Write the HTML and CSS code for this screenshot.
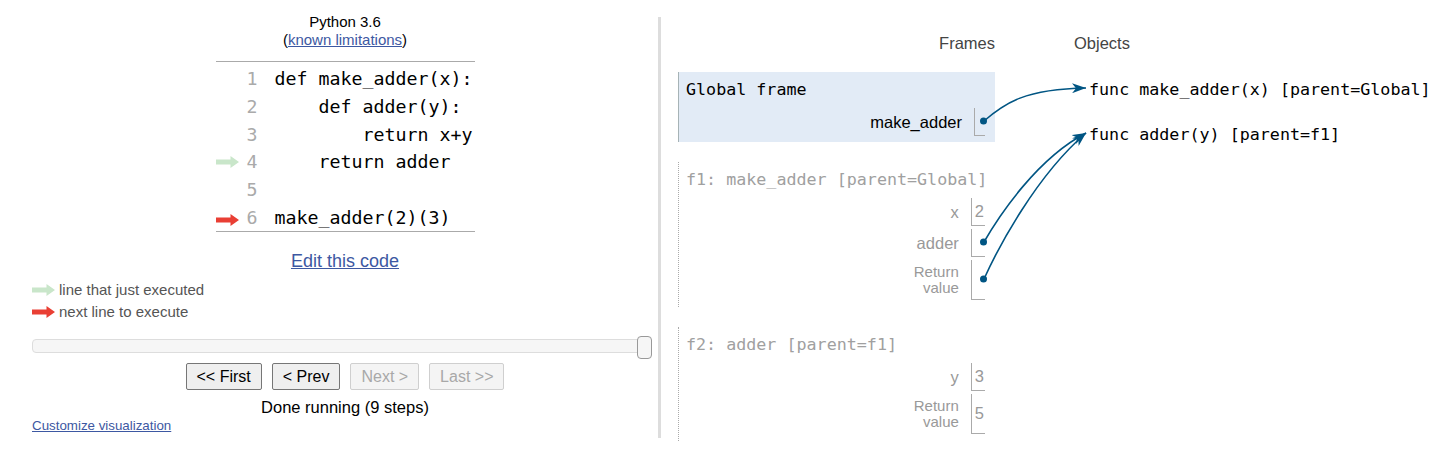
FILE: index.html
```html
<!DOCTYPE html>
<html>
<head>
<meta charset="utf-8">
<title>Python Tutor</title>
<link rel="stylesheet" href="styles.css">
</head>
<body>
<div class="page">
  <div class="left">
    <div class="lang">Python 3.6<br>(<a href="#">known limitations</a>)</div>
    <div class="code">
      <div class="row"><span class="gut"></span><span class="ln">1</span><span class="src">def make_adder(x):</span></div>
      <div class="row"><span class="gut"></span><span class="ln">2</span><span class="src">    def adder(y):</span></div>
      <div class="row"><span class="gut"></span><span class="ln">3</span><span class="src">        return x+y</span></div>
      <div class="row"><span class="gut"><svg class="garrow" width="23" height="12" viewBox="0 0 23 12"><polygon points="0,3.6 14.5,3.6 14.5,0 23,6 14.5,12 14.5,8.4 0,8.4" fill="#c9e6ca"/></svg></span><span class="ln">4</span><span class="src">    return adder</span></div>
      <div class="row"><span class="gut"></span><span class="ln">5</span><span class="src"> </span></div>
      <div class="row"><span class="gut"><svg class="garrow red" width="23" height="12" viewBox="0 0 23 12"><polygon points="0,3.6 14.5,3.6 14.5,0 23,6 14.5,12 14.5,8.4 0,8.4" fill="#e93f34"/></svg></span><span class="ln">6</span><span class="src">make_adder(2)(3)</span></div>
    </div>
    <div class="edit"><a href="#">Edit this code</a></div>
    <div class="legend">
      <div class="leg"><svg width="23" height="12" viewBox="0 0 23 12"><polygon points="0,3.6 14.5,3.6 14.5,0 23,6 14.5,12 14.5,8.4 0,8.4" fill="#c9e6ca"/></svg><span>line that just executed</span></div>
      <div class="leg"><svg width="23" height="12" viewBox="0 0 23 12"><polygon points="0,3.6 14.5,3.6 14.5,0 23,6 14.5,12 14.5,8.4 0,8.4" fill="#e93f34"/></svg><span>next line to execute</span></div>
    </div>
    <div class="slider"><span class="handle"></span></div>
    <div class="buttons">
      <button class="btn">&lt;&lt; First</button>
      <button class="btn">&lt; Prev</button>
      <button class="btn" disabled>Next &gt;</button>
      <button class="btn" disabled>Last &gt;&gt;</button>
    </div>
    <div class="status">Done running (9 steps)</div>
    <a class="customize" href="#">Customize visualization</a>
  </div>
  <div class="divider"></div>
  <div class="right">
    <div class="frames-col">
      <div class="colhead">Frames</div>
      <div class="frames">
        <div class="frame global">
          <div class="fhead">Global frame</div>
          <div class="vars">
            <div class="name">make_adder</div><div class="val"></div>
          </div>
        </div>
        <div class="frame">
          <div class="fhead">f1: make_adder [parent=Global]</div>
          <div class="vars">
            <div class="name">x</div><div class="val">2</div>
            <div class="name">adder</div><div class="val"></div>
            <div class="name ret">Return<br>value</div><div class="val"></div>
          </div>
        </div>
        <div class="frame">
          <div class="fhead">f2: adder [parent=f1]</div>
          <div class="vars">
            <div class="name">y</div><div class="val">3</div>
            <div class="name ret">Return<br>value</div><div class="val">5</div>
          </div>
        </div>
      </div>
    </div>
    <div class="objects-col">
      <div class="colhead">Objects</div>
      <div class="heap">
        <div class="obj">func make_adder(x) [parent=Global]</div>
        <div class="obj">func adder(y) [parent=f1]</div>
      </div>
    </div>
  </div>
</div>
<svg class="arrows" width="1448" height="473" viewBox="0 0 1448 473">
  <defs>
    <marker id="head" markerUnits="userSpaceOnUse" markerWidth="14" markerHeight="10" viewBox="0 0 14 10" refX="14" refY="5" orient="auto">
      <path d="M0,0 L14,5 L0,10 L4,5 z" fill="#005583"/>
    </marker>
  </defs>
  <g fill="none" stroke="#005583" stroke-width="1.6">
    <path d="M984,121 C1005,103 1025,89 1086,88" marker-end="url(#head)"/>
    <path d="M984,242 C1000,214 1038,158 1086,133" marker-end="url(#head)"/>
    <path d="M984,279 C998,248 1036,176 1086,133" marker-end="url(#head)"/>
  </g>
  <g fill="#005583">
    <circle cx="983.5" cy="121" r="3.5"/>
    <circle cx="983.5" cy="242" r="3.5"/>
    <circle cx="983.5" cy="279" r="3.5"/>
  </g>
</svg>
</body>
</html>
```

FILE: styles.css
```css
html, body {
  margin: 0;
  background: #fff;
}
body {
  position: relative;
  width: 1448px;
  height: 473px;
  overflow: hidden;
  font-family: "Liberation Sans", Arial, sans-serif;
  color: #000;
}
a { color: #3d58a2; }

.page {
  display: flex;
  align-items: flex-start;
}

/* ---------- left pane ---------- */
.left {
  margin-left: 32px;
  width: 626px;
  padding-top: 13px;
  display: flex;
  flex-direction: column;
  flex: none;
}
.lang {
  font-size: 15px;
  line-height: 18px;
  text-align: center;
}
.code {
  align-self: center;
  width: 259px;
  margin-top: 12px;
  padding-top: 3px;
  border-top: 1px solid #aaa;
  border-bottom: 1px solid #aaa;
  font-family: "DejaVu Sans Mono", monospace;
  font-size: 18.3px;
}
.row {
  display: flex;
  align-items: center;
  height: 27.65px;
}
.gut {
  width: 26px;
  display: flex;
  align-items: center;
}
.garrow.red { margin-top: 6px; }
.ln {
  width: 16px;
  text-align: right;
  color: #aaa;
}
.src {
  padding-left: 17px;
  white-space: pre;
}
.edit {
  margin-top: 19px;
  text-align: center;
  font-size: 18px;
  line-height: 21px;
}
.legend {
  margin-top: 7px;
  font-size: 15px;
  line-height: 22px;
  color: #555;
}
.leg {
  display: flex;
  align-items: center;
  gap: 4px;
}
.slider {
  position: relative;
  margin-top: 16px;
  width: 620px;
  height: 14px;
  box-sizing: border-box;
  border: 1px solid #ddd;
  border-radius: 4px;
  background: #f6f6f6;
}
.handle {
  position: absolute;
  right: -1px;
  top: -4px;
  width: 15px;
  height: 23px;
  box-sizing: border-box;
  border: 1px solid #999;
  border-radius: 4px;
  background: #f6f6f6;
}
.buttons {
  margin-top: 10px;
  display: flex;
  justify-content: center;
  gap: 10px;
}
.btn {
  font-family: "Liberation Sans", Arial, sans-serif;
  font-size: 16px;
  line-height: 19px;
  height: 27px;
  box-sizing: border-box;
  padding: 3px 10px;
  margin: 0;
  border: 1px solid #767676;
  border-radius: 2px;
  background: #efefef;
  color: #000;
}
.btn:disabled {
  color: #a8a8a8;
  border-color: #cfcfcf;
  background: #f4f4f4;
}
.status {
  margin-top: 8px;
  text-align: center;
  font-size: 16.5px;
  line-height: 19px;
}
.customize {
  align-self: flex-start;
  margin-top: 1px;
  font-size: 13.33px;
  line-height: 15px;
}

.divider {
  flex: none;
  width: 3px;
  height: 421px;
  margin-top: 17px;
  background: #ddd;
}

/* ---------- right pane ---------- */
.right {
  display: flex;
  align-items: flex-start;
}
.frames-col {
  margin-left: 17px;
  width: 317px;
  flex: none;
}
.colhead {
  margin-top: 33px;
  font-size: 16.5px;
  line-height: 20px;
  color: #444;
}
.frames-col .colhead { text-align: right; }
.frames { margin-top: 19px; }
.frame {
  margin-bottom: 20px;
  padding: 7px 10px 7px 7px;
  border-left: 1px dotted #aaa;
}
.frame.global {
  padding-bottom: 6px;
  background: #e2ebf6;
  border-left: 1px solid #a6b3b6;
}
.fhead {
  font-family: "DejaVu Sans Mono", monospace;
  font-size: 16.7px;
  line-height: 20px;
  color: #a0a0a0;
  white-space: pre;
}
.global .fhead { color: #000; }
.vars {
  display: grid;
  grid-template-columns: auto auto;
  justify-content: end;
  row-gap: 3px;
  margin-top: 9px;
}
.name {
  display: flex;
  align-items: center;
  justify-content: flex-end;
  text-align: right;
  padding-right: 12px;
  font-size: 16.5px;
  color: #999;
}
.global .name { color: #000; }
.name.ret {
  font-size: 15px;
  line-height: 16px;
  min-height: 40px;
}
.val {
  display: flex;
  align-items: center;
  min-height: 28px;
  min-width: 11px;
  box-sizing: border-box;
  padding: 0 1px 0 3px;
  border-left: 1px solid #aaa;
  border-bottom: 1px solid #aaa;
  font-size: 16.5px;
  color: #999;
}

.objects-col {
  margin-left: 79px;
  flex: none;
}
.heap {
  margin-top: 26px;
  padding-left: 15px;
  font-family: "DejaVu Sans Mono", monospace;
  font-size: 16.7px;
  line-height: 20px;
}
.obj { white-space: pre; }
.obj + .obj { margin-top: 25px; }

.arrows {
  position: absolute;
  left: 0;
  top: 0;
  pointer-events: none;
}
```
